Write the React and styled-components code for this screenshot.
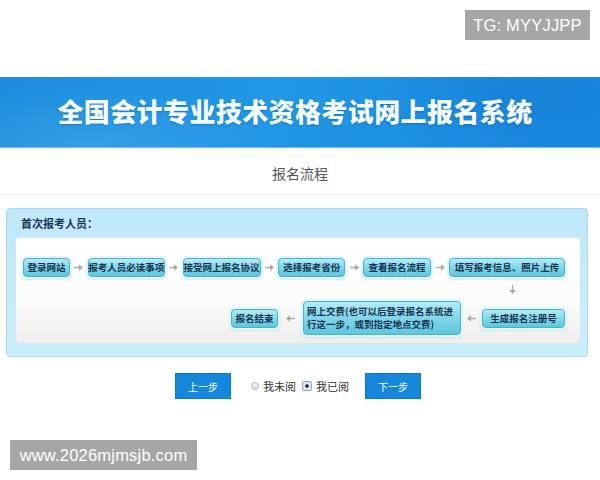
import styled, { createGlobalStyle } from "styled-components";

const GlobalStyle = createGlobalStyle`
  html, body {
    margin: 0;
    padding: 0;
    background: #fff;
    font-family: "Noto Sans CJK SC", "Noto Sans", sans-serif;
  }
`

const Page = styled.div`
  position: relative;
  width: 600px;
  height: 480px;
  overflow: hidden;
  background: #fff;
`

const TopSpace = styled.div`
  height: 77px;
`

const Watermark = styled.div`
  position: absolute;
  top: ${p => p.$top}px;
  left: ${p => p.$left}px;
  width: ${p => p.$w}px;
  height: 30px;
  text-align: center;
  background: #a6a6a6;
  color: #fff;
  font-family: "Liberation Sans", Arial, sans-serif;
  font-size: 16.5px;
  letter-spacing: 0.2px;
  line-height: 30px;
  white-space: nowrap;
`

const Banner = styled.div`
  height: 71px;
  display: flex;
  align-items: center;
  justify-content: center;
  padding-bottom: 4px;
  box-sizing: border-box;
  background:
    radial-gradient(ellipse 180px 60px at 90px 70px, rgba(120, 200, 255, 0.25), transparent),
    radial-gradient(ellipse 160px 70px at 520px 20px, rgba(20, 110, 200, 0.35), transparent),
    linear-gradient(100deg, #1d8ddd 0%, #2197e6 45%, #178ae0 100%);
  border-bottom: 1px solid #6fc0f0;

  h1 {
    margin: 0 0 0 -10px;
    color: #f2fbff;
    font-size: 26px;
    font-weight: 900;
    letter-spacing: 0.4px;
    text-shadow: 0 1px 2px rgba(0, 60, 120, 0.35);
  }
`

const SectionTitle = styled.div`
  height: 47px;
  display: flex;
  align-items: center;
  justify-content: center;
  border-bottom: 1px solid #eeeeee;
  color: #555;
  font-size: 14px;
  padding-top: 4px;
  box-sizing: border-box;
`

const Panel = styled.div`
  margin: 13px 12px 0 6px;
  padding: 0 6px 12px 8px;
  border: 1px solid #a9d6ec;
  border-radius: 4px;
  background: linear-gradient(#bfe8fa, #cbeefb);

  .header {
    height: 28px;
    display: flex;
    align-items: center;
    padding-left: 6px;
    color: #1d3550;
    font-size: 11px;
    font-weight: 700;
  }
`

const FlowBox = styled.div`
  background: linear-gradient(#ffffff 0%, #fbfbfb 60%, #eeeeee 100%);
  border: 1px solid #d4e6ef;
  border-radius: 4px;
  padding: 20px 15px 8px 7px;
  display: flex;
  flex-direction: column;
`

const Row = styled.div`
  display: flex;
  align-items: center;
  justify-content: ${p => p.$end ? "flex-end" : "space-between"};
  height: ${p => p.$h}px;
  padding-right: ${p => p.$pr || 0}px;
`

const Step = styled.div`
  width: ${p => p.$w}px;
  height: ${p => p.$h || 19}px;
  box-sizing: border-box;
  display: flex;
  align-items: center;
  justify-content: ${p => p.$left ? "flex-start" : "center"};
  padding: ${p => p.$left ? "0 3px" : "0"};
  border: 1px solid #45b3cf;
  border-radius: 4px;
  background: linear-gradient(#b4ecf6 0%, #86d8ea 45%, #5ec6de 100%);
  box-shadow: 0 0 0 2px #e4f5f9, 0 1px 2px 2px rgba(150, 190, 200, 0.35);
  color: #17344f;
  font-size: 9.5px;
  font-weight: 700;
  line-height: 13px;
  white-space: ${p => p.$left ? "normal" : "nowrap"};
`

const ArrowBox = styled.svg`
  display: block;
  flex: none;
  margin: ${p => p.$m || "0"};
`

function Arrow({ dir = "right", m }) {
  const rot = { right: 0, left: 180, down: 90 }[dir]
  return <ArrowBox width="11" height="11" viewBox="0 0 11 11" $m={m}>
    <g transform={`rotate(${rot} 5.5 5.5)`} fill="#a9a9a9">
      <rect x="1" y="4.8" width="6" height="1.4" />
      <path d="M6 2.2 L10 5.5 L6 8.8 Z" />
    </g>
  </ArrowBox>
}

const Actions = styled.div`
  display: flex;
  align-items: center;
  justify-content: center;
  margin: 16px 0 0 -4px;
  font-size: 11px;
  color: #333;
`

const Button = styled.div`
  width: 56px;
  height: 26px;
  display: flex;
  align-items: center;
  justify-content: center;
  background: #1688dc;
  border: 1px solid #0f78c8;
  box-sizing: border-box;
  color: #fff;
  font-size: 10px;
`

const Choice = styled.label`
  display: flex;
  align-items: center;
  gap: 4px;
  margin: ${p => p.$m};
`

const Radio = styled.span`
  width: 8px;
  height: 8px;
  box-sizing: border-box;
  border: 1px solid #b9b9b9;
  border-radius: ${p => p.$checked ? "2px" : "50%"};
  background: ${p => p.$checked ? "radial-gradient(circle, #333 0 1.5px, #dfe6f4 2px)" : "linear-gradient(#f4f4f4, #dcdcdc)"};
  ${p => p.$checked && "border-color: #8ea3c8; width: 10px; height: 10px;"}
`

export default function App() {
  return <Page>
    <GlobalStyle />
    <TopSpace />
    <Banner><h1>全国会计专业技术资格考试网上报名系统</h1></Banner>
    <SectionTitle>报名流程</SectionTitle>
    <Panel>
      <div className="header">首次报考人员：</div>
      <FlowBox>
        <Row $h={19}>
          <Step $w={47}>登录网站</Step>
          <Arrow />
          <Step $w={77}>报考人员必读事项</Step>
          <Arrow />
          <Step $w={78}>接受网上报名协议</Step>
          <Arrow />
          <Step $w={67}>选择报考省份</Step>
          <Arrow />
          <Step $w={68}>查看报名流程</Step>
          <Arrow />
          <Step $w={116}>填写报考信息、照片上传</Step>
        </Row>
        <Row $h={24} $end $pr={47}>
          <Arrow dir="down" />
        </Row>
        <Row $h={34} $end>
          <Step $w={47}>报名结束</Step>
          <Arrow dir="left" m="0 7px" />
          <Step $w={158} $h={34} $left>网上交费(也可以后登录报名系统进行这一步，或到指定地点交费)</Step>
          <Arrow dir="left" m="0 5px" />
          <Step $w={83}>生成报名注册号</Step>
        </Row>
      </FlowBox>
    </Panel>
    <Actions>
      <Button>上一步</Button>
      <Choice $m="0 0 0 20px"><Radio />我未阅</Choice>
      <Choice $m="0 16px 0 6px"><Radio $checked />我已阅</Choice>
      <Button>下一步</Button>
    </Actions>
    <Watermark $top={10} $left={465} $w={125}>TG: MYYJJPP</Watermark>
    <Watermark $top={440} $left={10} $w={187}>www.2026mjmsjb.com</Watermark>
  </Page>
}
